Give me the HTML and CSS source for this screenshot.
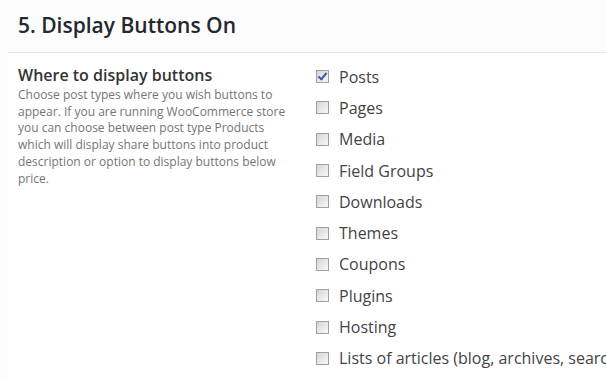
FILE: index.html
```html
<!DOCTYPE html>
<html lang="en">
<head>
    <meta charset="UTF-8">
    <title>Display Buttons On</title>
    <link rel="stylesheet" href="styles.css">
</head>
<body>

    <div class="panel">
        <div class="panel-head">
            <h2>5. Display Buttons On</h2>
        </div>

        <div class="setting">
            <div class="setting-info">
                <h3>Where to display buttons</h3>
                <p>Choose post types where you wish buttons to appear. If you are running WooCommerce store you can choose between post type Products which will display share buttons into product description or option to display buttons below price.</p>
            </div>

            <ul class="options">
                <li><span class="box checked"></span>Posts</li>
                <li><span class="box"></span>Pages</li>
                <li><span class="box"></span>Media</li>
                <li><span class="box"></span>Field Groups</li>
                <li><span class="box"></span>Downloads</li>
                <li><span class="box"></span>Themes</li>
                <li><span class="box"></span>Coupons</li>
                <li><span class="box"></span>Plugins</li>
                <li><span class="box"></span>Hosting</li>
                <li><span class="box"></span>Lists of articles (blog, archives, search results, etc.)</li>
            </ul>
        </div>
    </div>

</body>
</html>
```

FILE: styles.css
```css
body {
    margin: 0;
    padding: 0;
    background-color: #fcfcfc;
    font-family: "Open Sans", Arial, sans-serif;
    color: #333;
    overflow: hidden;
}

.panel {
    margin-left: 8px;
    background-color: #fff;
    min-height: 380px;
}

.panel-head {
    height: 52px;
    background-color: #fcfcfc;
    border-bottom: 1px solid #e5e5e5;
    padding-left: 10px;
    display: flex;
    align-items: center;
}

.panel-head h2 {
    margin: 0 0 2px;
    font-size: 21px;
    font-weight: 600;
    color: #23282d;
}

.setting {
    display: flex;
    padding-left: 10px;
}

.setting-info {
    width: 282px;
    flex-shrink: 0;
    padding-top: 12px;
}

.setting-info h3 {
    margin: 0;
    font-size: 16px;
    font-weight: 600;
    line-height: 20px;
    color: #333;
}

.setting-info p {
    margin: 2px 0 0;
    width: 276px;
    font-size: 12px;
    line-height: 16.7px;
    color: #757575;
}

.options {
    list-style: none;
    margin: 0;
    padding: 8px 0 0 16px;
    white-space: nowrap;
}

.options li {
    height: 31.3px;
    display: flex;
    align-items: center;
    font-size: 16px;
    color: #444;
}

.box {
    width: 11px;
    height: 11px;
    border: 1px solid #a0a0a0;
    background: linear-gradient(135deg, #d6d6d6, #f8f8f8);
    margin-right: 10px;
    position: relative;
    flex-shrink: 0;
}

.box.checked::after {
    content: "";
    position: absolute;
    left: 3px;
    top: 0;
    width: 3px;
    height: 7px;
    border: solid #3b5ba8;
    border-width: 0 2px 2px 0;
    transform: rotate(40deg);
}
```
